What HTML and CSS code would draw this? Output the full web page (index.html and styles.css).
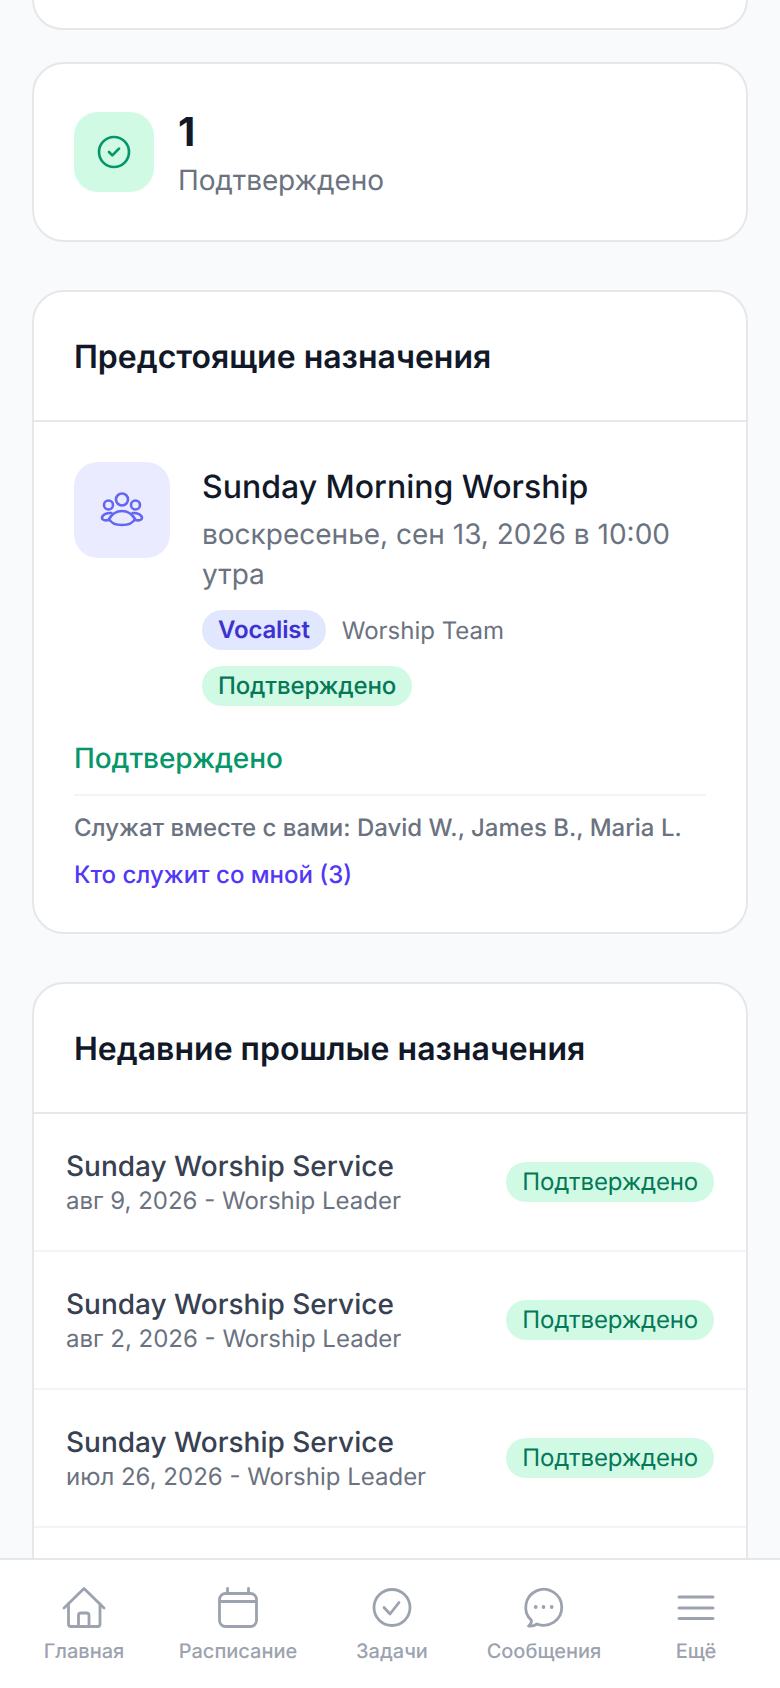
FILE: index.html
```html
<!DOCTYPE html>
<html lang="ru">
<head>
    <meta charset="UTF-8">
    <title>Расписание</title>
    <link rel="stylesheet" href="styles.css">
</head>
<body>
<main>
    <div class="card card-cut"></div>

    <div class="card stat-card">
        <div class="stat-icon">
            <svg width="40" height="40" viewBox="0 0 24 24" fill="none" stroke="#059669" stroke-width="1.6" stroke-linecap="round" stroke-linejoin="round">
                <path d="M9 12l2 2 4-4"/>
                <circle cx="12" cy="12" r="9"/>
            </svg>
        </div>
        <div>
            <div class="stat-num">1</div>
            <div class="stat-label">Подтверждено</div>
        </div>
    </div>

    <section class="card section-card">
        <h2 class="card-head">Предстоящие назначения</h2>
        <div class="upcoming">
            <div class="event">
                <div class="event-icon">
                    <svg width="48" height="48" viewBox="0 0 48 48" fill="none" stroke="#6366f1" stroke-width="2.6" stroke-linecap="round" stroke-linejoin="round">
                        <circle cx="24" cy="13.5" r="6"/>
                        <circle cx="10.5" cy="19" r="4.5"/>
                        <circle cx="37.5" cy="19" r="4.5"/>
                        <path d="M11 33C14 28 19 25 24 25C29 25 34 28 37 33C33 41 15 41 11 33Z"/>
                        <path d="M13.5 27C9 26.5 4 29 4 32C4 34 7 35 11 34"/>
                        <path d="M34.5 27C39 26.5 44 29 44 32C44 34 41 35 37 34"/>
                    </svg>
                </div>
                <div class="event-info">
                    <h3>Sunday Morning Worship</h3>
                    <p class="event-date">воскресенье, сен 13, 2026 в 10:00 утра</p>
                    <div class="event-tags">
                        <span class="pill pill-role">Vocalist</span>
                        <span class="team">Worship Team</span>
                    </div>
                    <span class="pill pill-ok pill-strong">Подтверждено</span>
                </div>
            </div>
            <p class="status-text">Подтверждено</p>
            <div class="together">
                <p>Служат вместе с вами: David W., James B., Maria L.</p>
                <a href="#">Кто служит со мной (3)</a>
            </div>
        </div>
    </section>

    <section class="card section-card">
        <h2 class="card-head">Недавние прошлые назначения</h2>
        <div class="past-row">
            <div class="past-text">
                <div class="past-title">Sunday Worship Service</div>
                <div class="past-sub">авг 9, 2026 - Worship Leader</div>
            </div>
            <span class="pill pill-ok">Подтверждено</span>
        </div>
        <div class="past-row">
            <div class="past-text">
                <div class="past-title">Sunday Worship Service</div>
                <div class="past-sub">авг 2, 2026 - Worship Leader</div>
            </div>
            <span class="pill pill-ok">Подтверждено</span>
        </div>
        <div class="past-row">
            <div class="past-text">
                <div class="past-title">Sunday Worship Service</div>
                <div class="past-sub">июл 26, 2026 - Worship Leader</div>
            </div>
            <span class="pill pill-ok">Подтверждено</span>
        </div>
        <div class="past-row past-empty"></div>
    </section>
</main>

<nav class="bottom-nav">
    <a href="#">
        <svg width="48" height="48" viewBox="0 0 48 48" fill="none" stroke="#9ca3af" stroke-width="2.8" stroke-linecap="round" stroke-linejoin="round">
            <path d="M4 24L24 4.5L44 24"/>
            <path d="M8.5 20V40A2.5 2.5 0 0 0 11 42.5H37.5A2.5 2.5 0 0 0 40 40V20"/>
            <path d="M18.5 42V31.5A2.5 2.5 0 0 1 21 29H26.5A2.5 2.5 0 0 1 29 31.5V42"/>
        </svg>
        <span>Главная</span>
    </a>
    <a href="#">
        <svg width="48" height="48" viewBox="0 0 48 48" fill="none" stroke="#9ca3af" stroke-width="2.8" stroke-linecap="round" stroke-linejoin="round">
            <rect x="5.5" y="9.5" width="37" height="33" rx="6"/>
            <path d="M5.5 17.5H42.5"/>
            <path d="M13.5 4.5V9"/>
            <path d="M34.5 4.5V9"/>
        </svg>
        <span>Расписание</span>
    </a>
    <a href="#">
        <svg width="48" height="48" viewBox="0 0 48 48" fill="none" stroke="#9ca3af" stroke-width="2.8" stroke-linecap="round" stroke-linejoin="round">
            <circle cx="24" cy="23.5" r="18"/>
            <path d="M16 23.5L22 30L31 18.5"/>
        </svg>
        <span>Задачи</span>
    </a>
    <a href="#">
        <svg width="48" height="48" viewBox="0 0 48 48" fill="none" stroke="#9ca3af" stroke-width="2.8" stroke-linecap="round" stroke-linejoin="round">
            <path d="M11.5 36.5A18 18 0 1 1 17 40C14.5 41.8 11.5 42.5 8.5 42C10.5 40.5 11.7 38.8 11.5 36.5Z"/>
            <circle class="nav-dot" cx="15.7" cy="23" r="1.9"/>
            <circle class="nav-dot" cx="23.5" cy="23" r="1.9"/>
            <circle class="nav-dot" cx="31.7" cy="23" r="1.9"/>
        </svg>
        <span>Сообщения</span>
    </a>
    <a href="#">
        <svg width="48" height="48" viewBox="0 0 48 48" fill="none" stroke="#9ca3af" stroke-width="3" stroke-linecap="round">
            <path d="M7 13H41"/>
            <path d="M7 24H41"/>
            <path d="M7 34.5H41"/>
        </svg>
        <span>Ещё</span>
    </a>
</nav>
</body>
</html>
```

FILE: styles.css
```css
* {
    box-sizing: border-box;
}
html, body {
    height: 100%;
}
body {
    margin: 0;
    overflow: hidden;
    background: #f9fafb;
    color: #111827;
    font-family: Inter, "Noto Sans", sans-serif;
    text-rendering: geometricPrecision;
}
h2, h3, p {
    margin: 0;
}
main {
    padding: 0 32px;
}
.card {
    background: #fff;
    border: 2px solid #e5e7eb;
    border-radius: 32px;
    margin-bottom: 48px;
}
.card-cut {
    height: 30px;
    border-top: 0;
    border-radius: 0 0 32px 32px;
    margin-bottom: 32px;
}

.stat-card {
    display: flex;
    align-items: center;
    gap: 24px;
    padding: 40px;
}
.stat-icon {
    width: 80px;
    height: 80px;
    border-radius: 24px;
    background: #d1fae5;
    display: flex;
    align-items: center;
    justify-content: center;
}
.stat-num {
    font-size: 40px;
    line-height: 56px;
    font-weight: 700;
}
.stat-label {
    font-size: 28px;
    line-height: 40px;
    letter-spacing: -0.12px;
    color: #6b7280;
}

.section-card {
    overflow: hidden;
}
.card-head {
    padding: 41px 40px 39px;
    border-bottom: 2px solid #e5e7eb;
    font-size: 32px;
    line-height: 48px;
    font-weight: 600;
}
.upcoming {
    padding: 40px 40px 39px;
}
.event {
    display: flex;
    gap: 32px;
}
.event-icon {
    flex: none;
    width: 96px;
    height: 96px;
    border-radius: 24px;
    background: #ebebff;
    display: flex;
    align-items: center;
    justify-content: center;
}
.event-info h3 {
    margin-top: 1px;
    font-size: 32px;
    line-height: 48px;
    font-weight: 500;
}
.event-date {
    margin-top: 3px;
    font-size: 28px;
    line-height: 40px;
    color: #6b7280;
}
.event-tags {
    display: flex;
    align-items: center;
    gap: 16px;
    margin: 16px 0;
}
.team {
    font-size: 24px;
    color: #6b7280;
}
.pill {
    display: inline-block;
    flex: none;
    padding: 0 16px;
    border-radius: 999px;
    font-size: 24px;
    line-height: 40px;
}
.pill-role {
    background: #e0e7ff;
    color: #3f31d1;
    font-weight: 600;
    letter-spacing: -0.15px;
}
.pill-ok {
    background: #d1fae5;
    color: #047857;
    letter-spacing: -0.16px;
}
.pill-strong {
    display: block;
    width: fit-content;
    font-weight: 500;
}
.status-text {
    margin-top: 31px;
    font-size: 28px;
    line-height: 42px;
    font-weight: 500;
    letter-spacing: -0.1px;
    color: #059669;
}
.together {
    margin-top: 15px;
    padding-top: 14px;
    border-top: 2px solid #f3f4f6;
    font-size: 24px;
    line-height: 36px;
    font-weight: 500;
    color: #6b7280;
}
.together a {
    display: block;
    margin-top: 11px;
    color: #5038f5;
    text-decoration: none;
}

.past-row {
    display: flex;
    align-items: center;
    justify-content: space-between;
    height: 138px;
    padding: 0 32px;
    border-bottom: 2px solid #f3f4f6;
}
.past-text {
    padding-top: 1px;
}
.past-title {
    font-size: 28px;
    line-height: 36px;
    font-weight: 500;
    color: #374151;
}
.past-sub {
    margin-top: 1px;
    font-size: 24px;
    line-height: 32px;
    color: #6b7280;
}

.bottom-nav {
    position: fixed;
    left: 0;
    right: 0;
    bottom: 0;
    height: 130px;
    padding: 24px 0 0 7px;
    background: #fff;
    border-top: 2px solid #e5e7eb;
    display: grid;
    grid-template-columns: 154px 154px 154px 150px 154px;
}
.bottom-nav a {
    display: flex;
    flex-direction: column;
    align-items: center;
    gap: 3px;
    font-size: 20px;
    line-height: 32px;
    font-weight: 500;
    color: #9ca3af;
    text-decoration: none;
}
.nav-dot {
    fill: #9ca3af;
    stroke: none;
}
```
